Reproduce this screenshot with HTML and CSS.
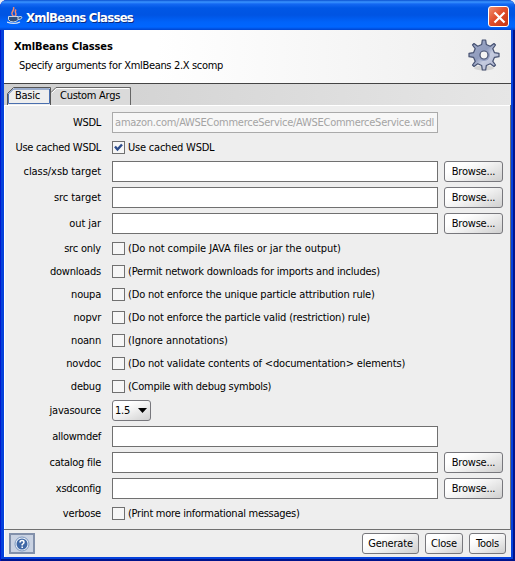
FILE: index.html
```
<!DOCTYPE html>
<html lang="en">
<head>
<meta charset="utf-8">
<title>XmlBeans Classes</title>
<link rel="stylesheet" href="styles.css">
</head>
<body>
<div class="window">
  <div class="titlebar">
    <svg class="java" width="16" height="18" viewBox="0 0 16 18">
      <path d="M6.500 9C2 6 8 4 6.500 0M7.500 9.500c4-3-1-3 1.500-7" fill="none" stroke="#f08a70" stroke-width="1.500"/>
      <path d="M1.500 9.500h9.500v3q-1 2.500-4.700 2.500t-4.800-2.500zM11 10q5-1.500 3.500 1.300-1 1.200-3.500 1.200" fill="#31507c" stroke="#c8d8ec" stroke-width="1"/>
      <path d="M0 15q7 3 13 0" fill="none" stroke="#d5e2f2" stroke-width="1.200"/>
    </svg>
    <span class="title">XmlBeans Classes</span>
    <button class="x"><svg width="21" height="21" viewBox="0 0 21 21"><path d="M5.500 5.500l10 10M15.500 5.500l-10 10" stroke="#fff" stroke-width="2.200"/></svg></button>
  </div>
  <div class="client">
    <div class="header">
      <div>
        <div class="h1">XmlBeans Classes</div>
        <div class="h2">Specify arguments for XmlBeans 2.X scomp</div>
      </div>
      <svg class="gear" width="32" height="34" viewBox="0 0 32 34">
        <defs><linearGradient id="g" x1="0" y1="0" x2="1" y2="1"><stop offset="0" stop-color="#a4adca"/><stop offset=".45" stop-color="#8f9bbd"/><stop offset=".6" stop-color="#c6cce0"/><stop offset="1" stop-color="#a9b0cc"/></linearGradient></defs>
        <ellipse cx="16" cy="29" rx="10" ry="2.500" fill="#d4d4d4"/>
        <path d="M14.300 1h3.400l.6 4.500 4 1.700L26 4.500 27.500 6l-2.700 3.700 1.700 4 4.500.6v3.400l-4.500.6-1.700 4 2.700 3.700L26 27.500l-3.700-2.700-4 1.700-.6 4.500h-3.400l-.6-4.500-4-1.700L6 27.500 4.500 26l2.700-3.700-1.700-4L1 17.700v-3.400l4.500-.6 1.700-4L4.500 6 6 4.500l3.700 2.700 4-1.700z" fill="url(#g)" stroke="#465171" stroke-width="1.200" stroke-linejoin="round"/>
        <circle cx="16" cy="16" r="6" fill="#939fc1"/>
        <circle cx="16" cy="16" r="4" fill="#f4f4f4" stroke="#465171" stroke-width="1.200"/>
      </svg>
    </div>
    <div class="tabs">
      <div class="tab basic"><svg width="44" height="18"><path d="M.5 18V6.500l6-6h37V18" fill="#eee" stroke="#555"/><path d="M1.500 16.500V7l5-5H42.500v14.500z" fill="none" stroke="#4a6fae"/></svg><span>Basic</span></div>
      <div class="tab custom"><svg width="80" height="18"><path d="M0 5.500L5 .500h74.500V18H0z" fill="#dadada"/><path d="M0 5.500L5 .500h74.500V18" fill="none" stroke="#666"/><path d="M1 6l4.500-4.500H78" fill="none" stroke="#fff"/></svg><span>Custom Args</span></div>
    </div>
    <div class="form">
      <div class="row"><label class="tight">WSDL</label><div class="field off"><span class="url">amazon.com/AWSECommerceService/AWSECommerceService.wsdl</span></div></div>
      <div class="row c"><label class="tight">Use cached WSDL</label><i class="box"><svg width="11" height="11"><path d="M2 4.500l2.500 3L9 2.500" fill="none" stroke="#2c4c8c" stroke-width="2.400"/></svg></i><span>Use cached WSDL</span></div>
      <div class="row"><label class="loose">class/xsb target</label><div class="field"></div><button class="btn browse">Browse...</button></div>
      <div class="row"><label class="loose">src target</label><div class="field"></div><button class="btn browse">Browse...</button></div>
      <div class="row"><label class="loose">out jar</label><div class="field"></div><button class="btn browse">Browse...</button></div>
      <div class="row c"><label>src only</label><i class="box"></i><span class="loose">(Do not compile JAVA files or jar the output)</span></div>
      <div class="row c"><label>downloads</label><i class="box"></i><span>(Permit network downloads for imports and includes)</span></div>
      <div class="row c"><label>noupa</label><i class="box"></i><span class="mid">(Do not enforce the unique particle attribution rule)</span></div>
      <div class="row c"><label>nopvr</label><i class="box"></i><span class="mid">(Do not enforce the particle valid (restriction) rule)</span></div>
      <div class="row c"><label>noann</label><i class="box"></i><span class="loose">(Ignore annotations)</span></div>
      <div class="row c"><label>novdoc</label><i class="box"></i><span class="mid">(Do not validate contents of &lt;documentation&gt; elements)</span></div>
      <div class="row c"><label>debug</label><i class="box"></i><span class="tight">(Compile with debug symbols)</span></div>
      <div class="row"><label>javasource</label><button class="btn select"><span>1.5</span><svg width="9" height="5"><path d="M0 0h9L4.500 5z"/></svg></button></div>
      <div class="row"><label class="tight">allowmdef</label><div class="field"></div></div>
      <div class="row"><label class="tight">catalog file</label><div class="field"></div><button class="btn browse">Browse...</button></div>
      <div class="row"><label class="tight">xsdconfig</label><div class="field"></div><button class="btn browse">Browse...</button></div>
      <div class="row c"><label>verbose</label><i class="box"></i><span class="tight">(Print more informational messages)</span></div>
    </div>
    <div class="footer">
      <button class="help"><svg width="16" height="16" viewBox="0 0 16 16"><circle cx="8" cy="8" r="7" fill="#e8eef6" stroke="#7c97bf"/><circle cx="8" cy="8" r="5.500" fill="#3f68a6"/><path d="M6 6.500Q6 4.500 8 4.500t2 1.700Q10 7.200 8.200 8.500V9.500M8.200 10.500V12" fill="none" stroke="#fff" stroke-width="1.500"/></svg></button>
      <button class="btn gen">Generate</button><button class="btn close">Close</button><button class="btn tools">Tools</button>
    </div>
  </div>
</div>
</body>
</html>
```
FILE: styles.css
```
* { box-sizing: border-box; }
body { margin: 0; background: #e8ecf4; font: 11px "DejaVu Sans Condensed", "DejaVu Sans", sans-serif; font-stretch: condensed; letter-spacing: -.21px; color: #000; overflow: hidden; }
button { font: inherit; color: inherit; letter-spacing: inherit; padding: 0; margin: 0; }
svg { display: block; flex: none; }
.window { width: 515px; height: 561px; padding: 0 4px 4px; border-radius: 7px 7px 0 0; background: #0441dc; box-shadow: inset 1px 0 #0019cf, inset -2px -2px #00138c; display: flex; flex-direction: column; }
.titlebar { height: 30px; flex: none; margin: 0 -4px; padding: 0 6px 0 7px; display: flex; align-items: center; border-radius: 7px 7px 0 0; background: linear-gradient(#0a50d0 0, #3a94ff 2px, #1468f2 4px, #0057e5 8px, #0054e3 15px, #0063fa 22px, #0066ff 27px, #0044cf 30px); }
.java { margin-top: 2px; }
.title { margin: 4px 0 0 3px; flex: 1; font: bold 13px "DejaVu Sans Condensed", sans-serif; font-stretch: condensed; color: #fff; text-shadow: 1px 1px #0a2a80; white-space: nowrap; letter-spacing: -.72px; }
.x { width: 21px; height: 21px; margin-top: 3px; border: 1px solid #fff; border-radius: 3px; background: linear-gradient(135deg, #f0906f, #e2502d 45%, #c53512); display: grid; place-items: center; }
.client { flex: 1; background: #eee; display: flex; flex-direction: column; box-shadow: inset 1px 0 #fff; }
.header { height: 54px; flex: none; padding: 10px 11px 0 10px; display: flex; justify-content: space-between; background: linear-gradient(90deg, #fff 30%, #eee); border-bottom: 1px solid #444; }
.h1 { font-weight: bold; line-height: 14px; letter-spacing: -.1px; }
.h2 { margin: 5px 0 0 5px; line-height: 14px; letter-spacing: -.33px; }
.gear { margin-top: -1px; }
.tabs { height: 21px; flex: none; padding: 3px 0 0 3px; display: flex; background: linear-gradient(90deg, #cecece, #e6e6e6); }
.tab { position: relative; white-space: nowrap; line-height: 18px; }
.tab span { position: absolute; left: 9px; top: 0; letter-spacing: -.28px; }
.basic span { left: 8px; }
.form { height: 425px; flex: none; padding: 7px 0 0; display: flex; flex-direction: column; gap: 5px; border: solid #707070; border-width: 0 1px 1px 0; box-shadow: inset 1px 1px #fff; }
.row { height: 21px; flex: none; display: flex; align-items: center; white-space: nowrap; }
.row.c { height: 18px; }
label { width: 97px; margin-right: 11px; text-align: right; }
.tight { letter-spacing: -.27px; }
.mid { letter-spacing: -.17px; }
.loose { letter-spacing: -.06px; }
.field { width: 326px; height: 21px; border: 1px solid #707070; background: #fff; }
.off { border-color: #aaa; background: #f7f7f7; color: #a4a4a4; display: flex; align-items: center; justify-content: flex-end; padding-right: 3px; }
.url { letter-spacing: -.26px; }
.box { width: 13px; height: 13px; margin: 1px 3px 0 0; border: 1px solid #707070; background: #f6f6f6; }
.btn { height: 21px; border: 1px solid #77777c; border-radius: 3px; background: linear-gradient(155deg, #fff 25%, #f2f2f2 50%, #cfcfcf); white-space: nowrap; display: flex; align-items: center; justify-content: center; }
.browse { width: 59px; margin-left: 6px; }
.select { width: 39px; padding: 0 3px 0 2px; justify-content: space-between; }
.footer { flex: 1; display: flex; align-items: center; padding: 0 5px; }
.help { width: 26px; height: 21px; margin-right: auto; border: 2px solid #8290aa; background: #c9d2e2; display: grid; place-items: center; }
.gen { width: 57px; }
.close { width: 38px; margin: 0 6px; }
.tools { width: 37px; }
```
